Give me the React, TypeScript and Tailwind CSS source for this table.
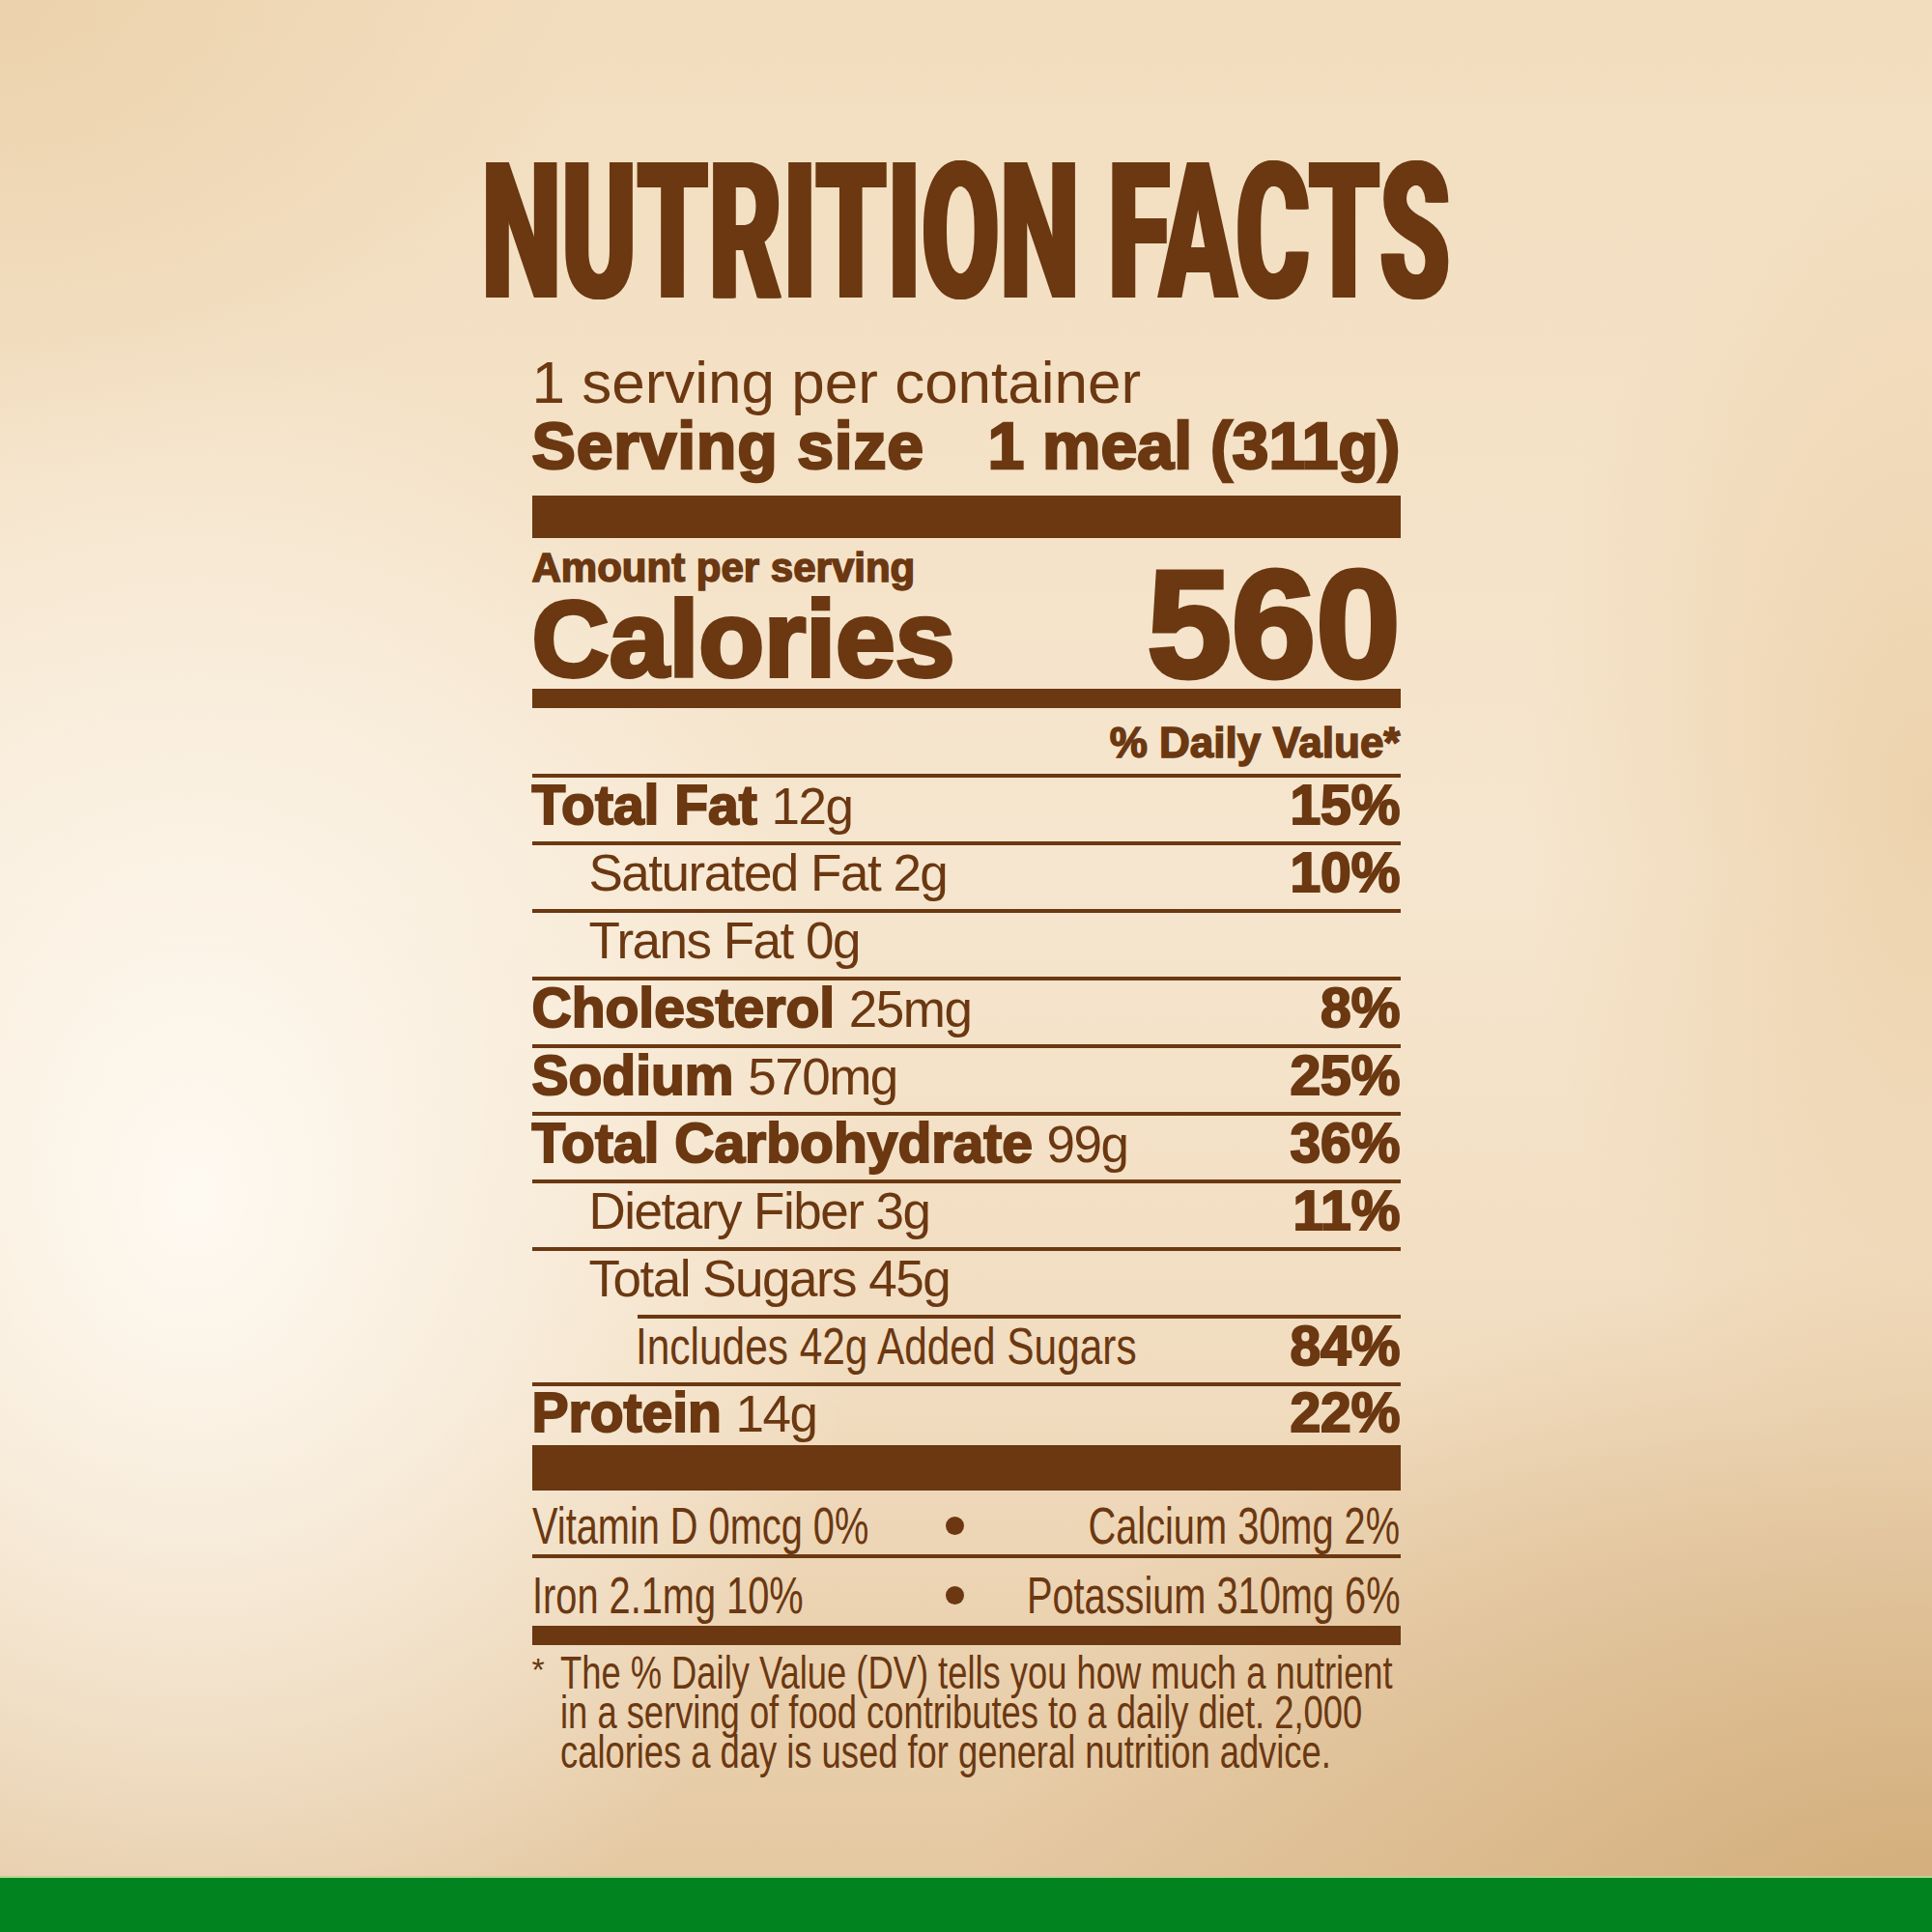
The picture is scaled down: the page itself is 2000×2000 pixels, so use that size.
import clsx from "clsx";

const SANS = "font-['Liberation_Sans',Arial,sans-serif]";
const HEAVY = "font-['Liberation_Sans',Arial,sans-serif] font-bold";
const TITLE = "font-['Roboto','Liberation_Sans',sans-serif] font-black";

type Nutrient = {
  name: string;
  amount: string;
  dv?: string;
  bold?: boolean;
  indent?: 0 | 1 | 2;
  lineIndent?: boolean;
  narrow?: boolean;
};

const nutrients: Nutrient[] = [
  { name: "Total Fat", amount: "12g", dv: "15%", bold: true },
  { name: "Saturated Fat", amount: "2g", dv: "10%", indent: 1 },
  { name: "Trans Fat", amount: "0g", indent: 1 },
  { name: "Cholesterol", amount: "25mg", dv: "8%", bold: true },
  { name: "Sodium", amount: "570mg", dv: "25%", bold: true },
  { name: "Total Carbohydrate", amount: "99g", dv: "36%", bold: true },
  { name: "Dietary Fiber", amount: "3g", dv: "11%", indent: 1 },
  { name: "Total Sugars", amount: "45g", indent: 1, lineIndent: true },
  { name: "Includes 42g Added Sugars", amount: "", dv: "84%", indent: 2, narrow: true },
];

const Rule = ({ className }: { className?: string }) => (
  <div className={clsx("bg-[#6b3811]", className)} />
);

function NutrientRow({ n }: { n: Nutrient }) {
  return (
    <>
      <div
        className={clsx(
          "flex items-center justify-between h-[66px] pb-[9px]",
          n.indent === 1 && "pl-[59px]",
          n.indent === 2 && "pl-[107px]"
        )}
      >
        <div className={clsx(SANS, "text-[53px] leading-none whitespace-nowrap")}>
          {n.bold ? (
            <>
              <span className={clsx(HEAVY, "text-[57px] [-webkit-text-stroke-width:2px]")}>{n.name}</span>{" "}
              <span className="tracking-[-1.5px]">{n.amount}</span>
            </>
          ) : n.narrow ? (
            <span className="inline-block origin-left scale-x-[0.8]">{n.name}</span>
          ) : (
            <span className="tracking-[-1.5px]">
              {n.name} {n.amount}
            </span>
          )}
        </div>
        {n.dv && (
          <span className={clsx(HEAVY, "text-[57px] leading-none [-webkit-text-stroke-width:2px]")}>{n.dv}</span>
        )}
      </div>
      <Rule className={clsx("h-[4px]", n.lineIndent && "ml-[109px]")} />
    </>
  );
}

function MineralRow({ left, right }: { left: string; right: string }) {
  return (
    <div
      className={clsx(
        SANS,
        "grid grid-cols-[428px_19px_minmax(0,1fr)] items-center h-[66px] pt-[6px] text-[53px] leading-none"
      )}
    >
      <div className="min-w-0 whitespace-nowrap">
        <span className="inline-block origin-left scale-x-[0.75]">{left}</span>
      </div>
      <span className="w-[19px] h-[19px] rounded-full bg-[#6b3811]" />
      <div className="min-w-0 flex justify-end whitespace-nowrap">
        <span className="inline-block shrink-0 origin-right scale-x-[0.75]">{right}</span>
      </div>
    </div>
  );
}

export default function App() {
  return (
    <div className="relative w-[2000px] h-[2000px] overflow-hidden flex flex-col text-[#6b3811] bg-[radial-gradient(ellipse_700px_900px_at_10%_62%,rgba(255,251,244,0.95),rgba(255,251,244,0)),radial-gradient(ellipse_1000px_700px_at_100%_100%,rgba(206,166,112,0.8),rgba(206,166,112,0)),radial-gradient(ellipse_420px_700px_at_100%_42%,rgba(228,192,140,0.5),rgba(228,192,140,0)),radial-gradient(ellipse_600px_500px_at_0%_0%,rgba(230,200,155,0.5),rgba(230,200,155,0)),linear-gradient(180deg,#f2ddbe_0%,#f6e6cf_45%,#f1dcbf_72%,#e3c69f_100%)]">
      <div className="flex-1 flex flex-col items-center">
        <h1
          className={clsx(
            TITLE,
            "mt-[142px] h-[197px] text-[197px] leading-none whitespace-nowrap scale-x-[0.597] [text-shadow:3px_0_0_#6b3811,-3px_0_0_#6b3811]"
          )}
        >
          NUTRITION FACTS
        </h1>

        <div className="w-[899px] flex flex-col">
          <p className={clsx(SANS, "mt-[26px] text-[62px] leading-none whitespace-nowrap")}>
            1 serving per container
          </p>
          <div
            className={clsx(
              HEAVY,
              "flex justify-between text-[68px] leading-none whitespace-nowrap [-webkit-text-stroke-width:2.5px]"
            )}
          >
            <span className="tracking-[0.8px]">Serving size</span>
            <span>1 meal (311g)</span>
          </div>

          <Rule className="mt-[18px] h-[44px]" />

          <p className={clsx(HEAVY, "mt-[13px] text-[42px] leading-[36px] [-webkit-text-stroke-width:1.5px]")}>
            Amount per serving
          </p>
          <div className={clsx(HEAVY, "h-[107px] flex items-baseline justify-between")}>
            <span className="text-[111px] leading-[111px] [-webkit-text-stroke-width:4px]">Calories</span>
            <span className="text-[157px] leading-[79px] [-webkit-text-stroke-width:5px]">560</span>
          </div>

          <Rule className="h-[20px]" />

          <p className={clsx(HEAVY, "mt-[14px] text-[44px] leading-none text-right [-webkit-text-stroke-width:1.5px]")}>
            % Daily Value*
          </p>
          <Rule className="mt-[10px] h-[4px]" />

          {nutrients.map((n) => (
            <NutrientRow key={n.name} n={n} />
          ))}

          <div className="flex items-center justify-between h-[61px] pb-[6px]">
            <div className={clsx(SANS, "text-[53px] leading-none whitespace-nowrap")}>
              <span className={clsx(HEAVY, "text-[57px] [-webkit-text-stroke-width:2px]")}>Protein</span>{" "}
              <span className="tracking-[-1.5px]">14g</span>
            </div>
            <span className={clsx(HEAVY, "text-[57px] leading-none [-webkit-text-stroke-width:2px]")}>22%</span>
          </div>

          <Rule className="h-[47px]" />

          <MineralRow left="Vitamin D 0mcg 0%" right="Calcium 30mg 2%" />
          <Rule className="h-[4px]" />
          <div className="h-[2px]" />
          <MineralRow left="Iron 2.1mg 10%" right="Potassium 310mg 6%" />
          <Rule className="mt-[2px] h-[20px]" />

          <div className={clsx(SANS, "mt-[8px] flex text-[48px] leading-[41px]")}>
            <span className="w-[29px] shrink-0 text-[34px] leading-[34px]">*</span>
            <p className="whitespace-nowrap origin-left scale-x-[0.757]">
              The % Daily Value (DV) tells you how much a nutrient
              <br />
              in a serving of food contributes to a daily diet. 2,000
              <br />
              calories a day is used for general nutrition advice.
            </p>
          </div>
        </div>
      </div>

      <div className="h-[58px] shrink-0 bg-[#01841f] border-t-2 border-[#b3d68f]" />
    </div>
  );
}
